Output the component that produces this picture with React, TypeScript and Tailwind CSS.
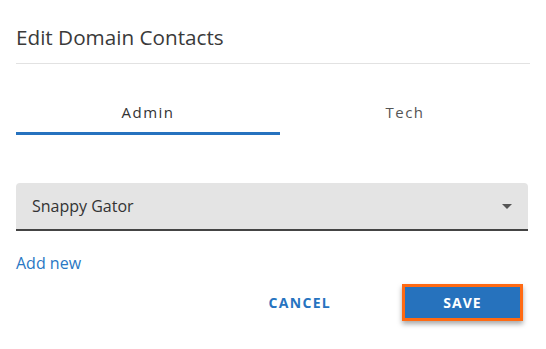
import { useState } from 'react';

const tabs = ['Admin', 'Tech'];

export default function App() {
  const [active, setActive] = useState(0);

  return (
    <div className="min-h-screen bg-white px-4 font-['Open_Sans',sans-serif]">
      {/* Header */}
      <h2 className="pt-[24px] text-[20.7px] leading-[26px] font-medium text-[#3a3a3a]">Edit Domain Contacts</h2>
      <div className="mt-[13px] h-px bg-[#e2e2e2]" />

      {/* Tabs */}
      <div className="mt-[26px] flex">
        {tabs.map((t, i) => (
          <button
            key={t}
            onClick={() => setActive(i)}
            className={`${i === 0 ? 'w-[264px]' : 'flex-1'} flex flex-col items-center`}
          >
            <span
              className={`pt-[12px] pb-[10px] text-[15px] leading-[20px] tracking-[1.5px] ${
                active === i ? 'font-medium text-[#333]' : 'text-[#555]'
              }`}
            >
              {t}
            </span>
            <span className={`h-[3px] w-full ${active === i ? 'bg-[#2672bf]' : 'bg-transparent'}`} />
          </button>
        ))}
      </div>

      {/* Select */}
      <div className="mr-[2px] mt-[48px] flex h-[48px] items-center justify-between rounded-t-[4px] border-b-2 border-[#444] bg-[#e4e4e4] pl-[16px] pr-[16px]">
        <span className="text-[16px] text-[#333]">Snappy Gator</span>
        <svg width="10" height="5" viewBox="0 0 10 5" className="mt-[1px]">
          <path d="M0 0h10L5 5z" fill="#555" />
        </svg>
      </div>

      <a className="mt-[20px] block text-[16px] leading-[24px] text-[#2a78c4]">Add new</a>

      {/* Actions */}
      <div className="mt-[9px] flex items-center justify-end pr-[7px]">
        <button className="mr-[71px] text-[14px] font-bold tracking-[1.3px] text-[#2673c0]">CANCEL</button>
        <button className="h-[37px] w-[121px] border-[3px] border-[#ff6a13] bg-[#2672bd] text-[14px] font-bold tracking-[1px] text-white shadow-[0_3px_5px_rgba(0,0,0,0.35)]">
          SAVE
        </button>
      </div>
    </div>
  );
}
